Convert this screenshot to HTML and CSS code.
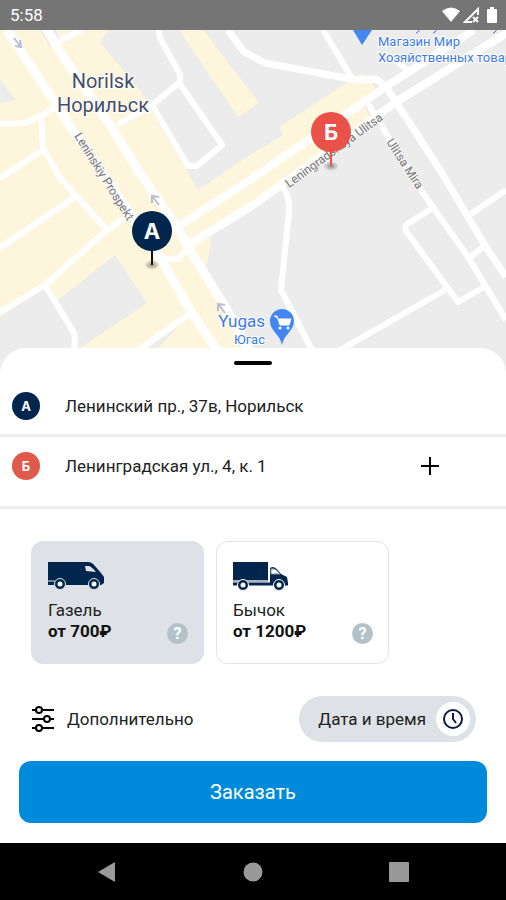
FILE: index.html
```html
<!DOCTYPE html>
<html lang="ru">
<head>
    <meta charset="UTF-8">
    <meta name="viewport" content="width=device-width, initial-scale=1.0">
    <title>Заказ машины</title>
    <link rel="stylesheet" href="styles.css">
</head>
<body>
    <header class="status-bar">
        <span>5:58</span>
        <div class="status-icons">
            <svg width="20" height="16" viewBox="0 0 20 16"><path d="M1 4Q10-3 19 4L10 15Z" fill="#fff"/></svg>
            <svg width="17" height="17" viewBox="0 0 17 17"><path d="M15 8V2L2 15H9" fill="none" stroke="#fff" stroke-width="2"/><path d="M10 10l5 5M15 10l-5 5" stroke="#fff" stroke-width="2"/></svg>
            <svg width="12" height="17" viewBox="0 0 12 17"><path d="M4 0H8V2H10Q11 2 11 3V15Q11 16 10 16H2Q1 16 1 15V3Q1 2 2 2H4Z" fill="#fff"/></svg>
        </div>
    </header>

    <main>
        <svg class="map" viewBox="0 30 506 348" role="img" aria-label="Карта">
            <defs>
                <radialGradient id="shadow">
                    <stop offset="0" stop-color="#000" stop-opacity=".4"/>
                    <stop offset="1" stop-color="#000" stop-opacity="0"/>
                </radialGradient>
            </defs>
            <rect y="30" width="506" height="348" fill="#ececec"/>
            <!-- built-up areas -->
            <g fill="#fdf5dc">
                <path d="M0 30H108L100 42L150 103L152 112L198 190L253 153L283 135L279 127L362 73L375 87L362 103L370 117L253 203L210 230Q212 255 203 272L250 348V378H0Z"/>
                <path d="M179 30H203L259 103L238 117Z"/>
            </g>
            <g fill="#ececec">
                <path d="M0 80L16 100L0 103Z"/>
                <path d="M40 30H56L62 42L50 47Z"/>
                <path d="M0 317L45 288L58 300L115 255L147 303L80 348V378H0Z"/>
                <path d="M148 348L179 326L158 348Z"/>
                <path d="M370 98L389 87L396 100L374 114Z"/>
            </g>
            <!-- streets -->
            <g fill="none" stroke="#fff" stroke-width="6" stroke-linejoin="round">
                <path d="M7 30L53 100L77 137L160 257L190 310L217 350" stroke-width="9"/>
                <path d="M45 26L60 52L110 125L143 178L177 227L190 250L224 305L249 350" stroke-width="9"/>
                <path d="M57 42L82 30"/>
                <path d="M0 124L25 123L43 115L62 102M41 116L43 148L60 178L107 230M0 178L43 150M0 248L73 198"/>
                <path d="M0 312L45 285L107 230L125 218M45 285L73 331Q76 336 74 350"/>
                <path d="M117 125L152 105L180 82M158 30L161 40L180 74V84L222 145L197 166H188L152 105"/>
                <path d="M228 30L244 52L265 63L356 80L376 79L387 88L396 102L440 170L486 247L506 277" stroke-width="7"/>
                <path d="M323 30L353 80M395 60L407 70"/>
                <path d="M177 227L253 178L387 86L474 30M190 244L253 205L396 102L508 32" stroke-width="8"/>
                <path d="M160 259H178L190 246"/>
                <path d="M365 99L423 193L468 257L506 320"/>
                <path d="M433 208L407 224Q404 227 406 231L458 302L484 287M468 258L485 246M471 214L506 190M445 290L340 350"/>
                <path d="M283 188Q290 197 289 212L281 290L312 350M138 350L190 314"/>
            </g>
            <g fill="none" stroke="#b8bfd0" stroke-width="2">
                <path d="M14 38L20 46M15 46L21 47L20 40"/>
                <path d="M159 205L153 197M152 203V196L159 197"/>
                <path d="M225 313L219 305M218 311V304L225 305"/>
            </g>
            <g class="place">
                <text x="103" y="88" text-anchor="middle">Norilsk</text>
                <text x="103" y="112" text-anchor="middle">Норильск</text>
            </g>
            <g class="street">
                <text transform="translate(74 136) rotate(58)">Leninskiy Prospekt</text>
                <text transform="translate(289 188) rotate(-36)">Leningradskaya Ulitsa</text>
                <text transform="translate(386 142) rotate(57)">Ulitsa Mira</text>
            </g>
            <g class="shop">
                <path d="M416 33l2-1 2-3M433 33l2-1 2-3M493 33l2-1 2-3" fill="none" stroke="#3d7be8" stroke-width="1"/>
                <text x="378" y="46">Магазин Мир</text>
                <text x="378" y="62">Хозяйственных товаров</text>
                <text class="shop-title" x="265" y="327" text-anchor="end">Yugas</text>
                <text x="265" y="344" text-anchor="end">Югас</text>
            </g>
            <path d="M353 30H372L362 45Z" fill="#4285f4"/>
            <path d="M282 345C280 334 270 331 270 321A12 12 0 0 1 294 321C294 331 284 334 282 345Z" fill="#4285f4"/>
            <path d="M274 316h3l3 9h9l2-6h-13" fill="#fff" stroke="#fff" stroke-width="1"/>
            <circle cx="280" cy="328" r="1.500" fill="#fff"/>
            <circle cx="288" cy="328" r="1.500" fill="#fff"/>
            <!-- route pins -->
            <ellipse cx="152" cy="265" rx="8" ry="5" fill="url(#shadow)"/>
            <path d="M152 250V265" stroke="#111" stroke-width="2"/>
            <circle cx="152" cy="231" r="20" fill="#00264d"/>
            <text class="pin" x="152" y="239" text-anchor="middle">А</text>
            <ellipse cx="331" cy="166" rx="8" ry="5" fill="url(#shadow)"/>
            <path d="M331 150V166" stroke="#ea5148" stroke-width="2"/>
            <circle cx="331" cy="132" r="20" fill="#ea5148"/>
            <text class="pin" x="331" y="140" text-anchor="middle">Б</text>
        </svg>

        <section class="sheet">
            <div class="handle"></div>
            <div class="address">
                <label class="badge" for="from">А</label>
                <input id="from" type="text" value="Ленинский пр., 37в, Норильск">
            </div>
            <div class="address address-to">
                <label class="badge badge-red" for="to">Б</label>
                <input id="to" type="text" value="Ленинградская ул., 4, к. 1">
                <button class="add" type="button" aria-label="Добавить адрес">
                    <svg width="20" height="20" viewBox="0 0 20 20"><path d="M10 1V19M1 10H19" stroke="#000" stroke-width="2"/></svg>
                </button>
            </div>

            <div class="cars">
                <div class="car">
                    <input type="radio" name="car" id="gazelle" checked>
                    <label for="gazelle">
                        <svg width="58" height="32" viewBox="0 0 58 32">
                            <path d="M0 2H40Q44 2 47 6L53 13L56 17V23L53 25H0Z" fill="#00264d"/>
                            <path d="M37 6H41Q44 7 48 12L38 11Z" fill="#dee1e6"/>
                            <path d="M0 21H7" stroke="#dee1e6"/>
                            <g fill="#00264d" stroke="#dee1e6" stroke-width="1"><circle cx="12" cy="24" r="5.500"/><circle cx="46" cy="24" r="5.500"/></g>
                            <circle cx="12" cy="24" r="2.500" fill="#fff"/><circle cx="46" cy="24" r="2.500" fill="#fff"/>
                        </svg>
                        <span>Газель</span>
                        <b>от 700₽</b>
                    </label>
                    <button class="help" type="button" aria-label="О машине Газель">?</button>
                </div>
                <div class="car">
                    <input type="radio" name="car" id="bychok">
                    <label for="bychok">
                        <svg width="58" height="32" viewBox="0 0 58 32">
                            <path d="M0 2H35V20H0Z" fill="#00264d"/>
                            <path d="M0 21H35" stroke="#a9b3c2" stroke-width="2"/>
                            <path d="M0 24H55" stroke="#00264d" stroke-width="3"/>
                            <path d="M37 25V9Q37 7 40 7Q44 8 48 14L54 17L55 23L52 25Z" fill="#00264d"/>
                            <path d="M38 9Q43 8 47 14H38Z" fill="#fff" stroke="#7d8ba0" stroke-width="1"/>
                            <g fill="#00264d" stroke="#fff" stroke-width="1"><circle cx="10" cy="25" r="5.500"/><circle cx="46" cy="25" r="5.500"/></g>
                            <circle cx="10" cy="25" r="2.500" fill="#fff"/><circle cx="46" cy="25" r="2.500" fill="#fff"/>
                        </svg>
                        <span>Бычок</span>
                        <b>от 1200₽</b>
                    </label>
                    <button class="help" type="button" aria-label="О машине Бычок">?</button>
                </div>
            </div>

            <div class="options">
                <button class="more" type="button">
                    <svg width="24" height="26" viewBox="0 0 24 26">
                        <path d="M1 4H23M1 13H23M1 22H23" stroke="#000" stroke-width="2"/>
                        <g fill="#fff" stroke="#000" stroke-width="2"><circle cx="8" cy="4" r="3"/><circle cx="16" cy="13" r="3"/><circle cx="8" cy="22" r="3"/></g>
                    </svg>
                    Дополнительно
                </button>
                <button class="date" type="button">
                    Дата и время
                    <span class="clock">
                        <svg width="22" height="22" viewBox="0 0 22 22" fill="none" stroke="#0b1b45" stroke-width="2"><circle cx="11" cy="11" r="9"/><path d="M11 5V11L14 15"/></svg>
                    </span>
                </button>
            </div>
            <button class="order" type="button">Заказать</button>
        </section>
    </main>

    <nav class="nav-bar">
        <button type="button" aria-label="Назад"><svg width="22" height="22" viewBox="0 0 22 22"><path d="M19 1V21L2 11Z" fill="#999"/></svg></button>
        <button type="button" aria-label="Домой"><svg width="22" height="22" viewBox="0 0 22 22"><circle cx="11" cy="11" r="9.500" fill="#999"/></svg></button>
        <button type="button" aria-label="Недавние"><svg width="22" height="22" viewBox="0 0 22 22"><rect x="1" y="1" width="20" height="20" rx="1" fill="#999"/></svg></button>
    </nav>
</body>
</html>
```

FILE: styles.css
```css
body {
    margin: 0;
    min-height: 100vh;
    display: flex;
    flex-direction: column;
    background-color: white;
    color: #222;
    font-family: Roboto, "Liberation Sans", sans-serif;
    font-size: 17px;
}
main {
    flex: 1;
}
svg {
    display: block;
}
button {
    padding: 0;
    border: none;
    background: none;
    color: inherit;
    font: inherit;
    cursor: pointer;
}
.status-bar {
    height: 30px;
    padding: 0 8px 0 10px;
    display: flex;
    align-items: center;
    justify-content: space-between;
    background-color: #757575;
    color: white;
}
.status-icons {
    display: flex;
    align-items: center;
    gap: 2px;
}
.status-icons svg:last-child {
    margin-left: 4px;
}

/* map */
.map {
    width: 100%;
}
.place {
    font-size: 20px;
    fill: #464e6b;
    stroke: white;
    stroke-width: 2px;
    paint-order: stroke;
}
.street {
    font-size: 12px;
    fill: #777;
    stroke: #f4f4f4;
    stroke-width: 2px;
    paint-order: stroke;
}
.shop {
    font-size: 13px;
    fill: #3d7be8;
}
.shop text {
    stroke: white;
    stroke-width: 2px;
    paint-order: stroke;
}
.shop-title {
    font-size: 17px;
}
.pin {
    font-family: Inter, sans-serif;
    font-size: 22px;
    font-weight: 700;
    fill: white;
}

/* bottom sheet */
.sheet {
    position: relative;
    margin-top: -30px;
    padding: 13px 0 20px;
    border-radius: 26px 26px 0 0;
    background-color: white;
}
.handle {
    width: 38px;
    height: 4px;
    margin: 0 auto 12px;
    border-radius: 2px;
    background-color: black;
}
.address {
    height: 57px;
    padding: 0 66px 0 12px;
    display: flex;
    align-items: center;
    border-bottom: 3px solid #ededed;
}
.address-to {
    padding-bottom: 11px;
}
.badge {
    flex: none;
    width: 28px;
    height: 28px;
    border-radius: 50%;
    background-color: #00264d;
    color: white;
    font-family: Inter, sans-serif;
    font-size: 13px;
    font-weight: 700;
    line-height: 28px;
    text-align: center;
}
.address-to {
    height: 58px;
}
.badge-red {
    background-color: #e05a4c;
}
.address input {
    flex: 1;
    min-width: 0;
    margin-left: 25px;
    padding: 0;
    border: none;
    outline: none;
    background: none;
    color: inherit;
    font: inherit;
}
.cars {
    display: flex;
    gap: 12px;
    padding: 32px 31px;
}
.car {
    position: relative;
    width: 173px;
}
.car input {
    position: absolute;
    opacity: 0;
}
.car label {
    display: flex;
    flex-direction: column;
    height: 123px;
    padding: 18px 16px;
    box-sizing: border-box;
    border: 1px solid #e2e3e5;
    border-radius: 12px;
    line-height: 21px;
    cursor: pointer;
}
.car svg {
    margin-bottom: 8px;
}
.car input:checked + label {
    background-color: #dee1e6;
    border-color: #dee1e6;
}
.car b {
    color: #111;
}
.help {
    position: absolute;
    right: 16px;
    bottom: 20px;
    width: 21px;
    height: 21px;
    border-radius: 50%;
    background-color: #b3c1c9;
    color: white;
    font-size: 16px;
    font-weight: 700;
    line-height: 21px;
}
.options {
    padding: 0 30px 19px 31px;
    display: flex;
    align-items: center;
    justify-content: space-between;
}
.more {
    display: flex;
    align-items: center;
    gap: 12px;
}
.date {
    height: 46px;
    padding: 0 6px 0 19px;
    display: flex;
    align-items: center;
    gap: 10px;
    border-radius: 23px;
    background-color: #dee1e6;
}
.clock {
    width: 34px;
    height: 34px;
    display: grid;
    place-items: center;
    border-radius: 50%;
    background-color: white;
}
.order {
    display: block;
    width: calc(100% - 38px);
    height: 62px;
    margin: 0 auto;
    border-radius: 12px;
    background-color: #008adc;
    color: white;
    font-size: 20px;
}

.nav-bar {
    height: 58px;
    padding: 0 34px;
    display: flex;
    align-items: center;
    justify-content: space-around;
    background-color: black;
}
```
